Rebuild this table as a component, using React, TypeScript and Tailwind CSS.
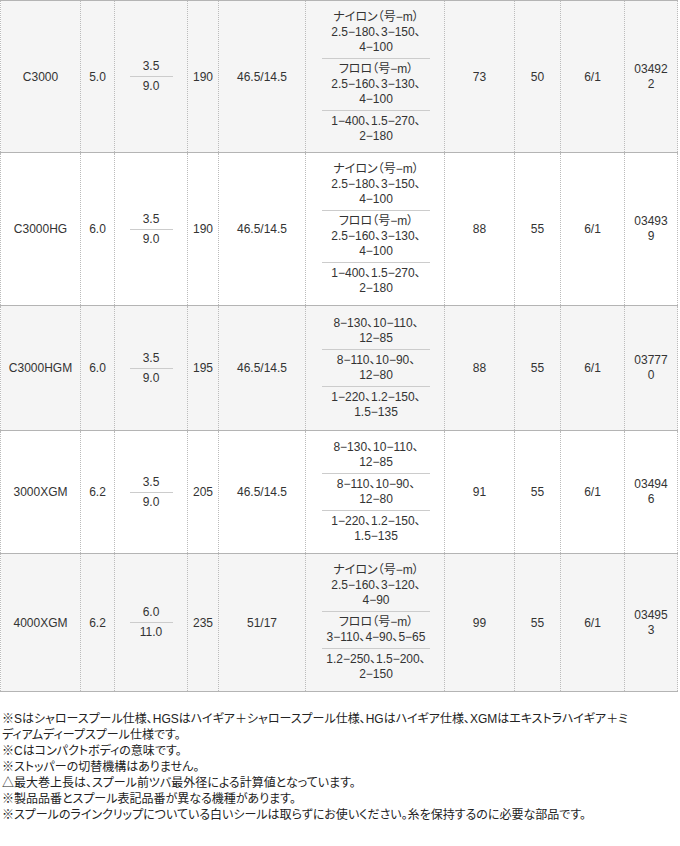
import * as React from "react"

type Row = {
  model: string
  gear: string
  drag: [string, string]
  weight: string
  handle: string
  lines: string[][]
  retrieve: string
  handleLen: string
  bearing: string
  code: [string, string]
}

const nylonMeta = ["ナイロン（号−m）"]

const rows: Row[] = [
  {
    model: "C3000",
    gear: "5.0",
    drag: ["3.5", "9.0"],
    weight: "190",
    handle: "46.5/14.5",
    lines: [
      [...nylonMeta, "2.5−180、3−150、", "4−100"],
      ["フロロ（号−m）", "2.5−160、3−130、", "4−100"],
      ["1−400、1.5−270、", "2−180"],
    ],
    retrieve: "73",
    handleLen: "50",
    bearing: "6/1",
    code: ["03492", "2"],
  },
  {
    model: "C3000HG",
    gear: "6.0",
    drag: ["3.5", "9.0"],
    weight: "190",
    handle: "46.5/14.5",
    lines: [
      [...nylonMeta, "2.5−180、3−150、", "4−100"],
      ["フロロ（号−m）", "2.5−160、3−130、", "4−100"],
      ["1−400、1.5−270、", "2−180"],
    ],
    retrieve: "88",
    handleLen: "55",
    bearing: "6/1",
    code: ["03493", "9"],
  },
  {
    model: "C3000HGM",
    gear: "6.0",
    drag: ["3.5", "9.0"],
    weight: "195",
    handle: "46.5/14.5",
    lines: [
      ["8−130、10−110、", "12−85"],
      ["8−110、10−90、", "12−80"],
      ["1−220、1.2−150、", "1.5−135"],
    ],
    retrieve: "88",
    handleLen: "55",
    bearing: "6/1",
    code: ["03777", "0"],
  },
  {
    model: "3000XGM",
    gear: "6.2",
    drag: ["3.5", "9.0"],
    weight: "205",
    handle: "46.5/14.5",
    lines: [
      ["8−130、10−110、", "12−85"],
      ["8−110、10−90、", "12−80"],
      ["1−220、1.2−150、", "1.5−135"],
    ],
    retrieve: "91",
    handleLen: "55",
    bearing: "6/1",
    code: ["03494", "6"],
  },
  {
    model: "4000XGM",
    gear: "6.2",
    drag: ["6.0", "11.0"],
    weight: "235",
    handle: "51/17",
    lines: [
      [...nylonMeta, "2.5−160、3−120、", "4−90"],
      ["フロロ（号−m）", "3−110、4−90、5−65"],
      ["1.2−250、1.5−200、", "2−150"],
    ],
    retrieve: "99",
    handleLen: "55",
    bearing: "6/1",
    code: ["03495", "3"],
  },
]

const rowHeights = ["h-[152px]", "h-[153px]", "h-[125px]", "h-[123px]", "h-[138px]"]

const notes = [
  "※Sはシャロースプール仕様、HGSはハイギア＋シャロースプール仕様、HGはハイギア仕様、XGMはエキストラハイギア＋ミ",
  "ディアムディープスプール仕様です。",
  "※Cはコンパクトボディの意味です。",
  "※ストッパーの切替機構はありません。",
  "△最大巻上長は、スプール前ツバ最外径による計算値となっています。",
  "※製品品番とスプール表記品番が異なる機種があります。",
  "※スプールのラインクリップについている白いシールは取らずにお使いください。糸を保持するのに必要な部品です。",
]

const cell = "border-x border-dotted border-[#bbbbbb] text-center align-middle p-0"

export default function App() {
  return (
    <div className="w-[680px] bg-white text-[12px] text-[#333333] font-['Liberation_Sans','Noto_Sans_CJK_JP',sans-serif] [font-feature-settings:'palt']">
      <table className="w-[677px] table-fixed border-collapse border-t border-solid border-t-[#b4b4b4]">
        <colgroup>
          <col className="w-[80px]" />
          <col className="w-[34px]" />
          <col className="w-[73px]" />
          <col className="w-[31px]" />
          <col className="w-[87px]" />
          <col className="w-[139px]" />
          <col className="w-[70px]" />
          <col className="w-[46px]" />
          <col className="w-[64px]" />
          <col className="w-[53px]" />
        </colgroup>
        <tbody>
          {rows.map((r, i) => (
            <tr
              key={r.model}
              className={`${rowHeights[i]} border-b border-solid border-b-[#b4b4b4] ${i % 2 === 0 ? "bg-[#f5f5f5]" : "bg-white"}`}
            >
              <td className={cell}>{r.model}</td>
              <td className={cell}>{r.gear}</td>
              <td className={cell}>
                <div className="mx-auto w-[43px] leading-[15px]">
                  <div className="border-b border-[#cccccc] pb-[2px]">{r.drag[0]}</div>
                  <div className="pt-[2px]">{r.drag[1]}</div>
                </div>
              </td>
              <td className={cell}>{r.weight}</td>
              <td className={cell}>{r.handle}</td>
              <td className={`${cell} pl-[16px] pr-[14px]`}>
                <div className="leading-[15px] whitespace-nowrap">
                  {r.lines.map((block, bi) => (
                    <div
                      key={bi}
                      className={`${bi < r.lines.length - 1 ? "border-b border-[#cccccc] pb-[3px]" : ""} ${bi > 0 ? "pt-[3px]" : ""}`}
                    >
                      {block.map((l) => (
                        <div key={l}>{l}</div>
                      ))}
                    </div>
                  ))}
                </div>
              </td>
              <td className={cell}>{r.retrieve}</td>
              <td className={cell}>{r.handleLen}</td>
              <td className={cell}>{r.bearing}</td>
              <td className={`${cell} leading-[15px]`}>
                <div>{r.code[0]}</div>
                <div>{r.code[1]}</div>
              </td>
            </tr>
          ))}
        </tbody>
      </table>

      <div className="mt-[19px] pl-[2px] pb-[20px] leading-[16px] text-[#222222] whitespace-nowrap">
        {notes.map((n) => (
          <div key={n}>{n}</div>
        ))}
      </div>
    </div>
  )
}
